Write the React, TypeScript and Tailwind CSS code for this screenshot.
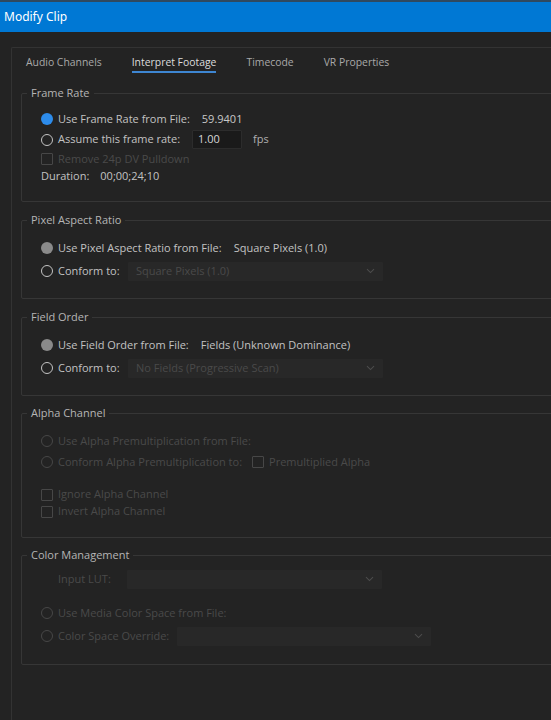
import React from "react";

type RadioState = "on" | "off" | "dimOn" | "dimOff";

function Radio({ state }: { state: RadioState }) {
  if (state === "on") {
    return <span className="w-[12px] h-[12px] shrink-0 rounded-full bg-[#2d8ceb]" />;
  }
  if (state === "dimOn") {
    return <span className="w-[12px] h-[12px] shrink-0 rounded-full bg-[#8a8a8a]" />;
  }
  if (state === "dimOff") {
    return (
      <span className="w-[12px] h-[12px] shrink-0 rounded-full border-[1.5px] border-[#474747]" />
    );
  }
  return (
    <span className="w-[12px] h-[12px] shrink-0 rounded-full border-[1.5px] border-[#c4c4c4]" />
  );
}

function Checkbox({ className }: { className?: string }) {
  return (
    <span
      className={`block w-[12px] h-[12px] shrink-0 rounded-[1px] border-[1.5px] border-[#474747] ${className ?? ""}`}
    />
  );
}

function Chevron() {
  return (
    <svg width="9" height="6" viewBox="0 0 9 6" className="shrink-0">
      <path d="M1 1.2 L4.5 4.6 L8 1.2" fill="none" stroke="#4c4c4c" strokeWidth="1.1" />
    </svg>
  );
}

function Dropdown({ width, text }: { width: string; text?: string }) {
  return (
    <div
      className={`${width} h-[19px] bg-[#282828] rounded-[1px] flex items-center justify-between pl-[8px] pr-[8px] text-[#4a4a4a]`}
    >
      <span>{text ?? ""}</span>
      <Chevron />
    </div>
  );
}

function Group({
  title,
  height,
  className,
  children,
}: {
  title: string;
  height: string;
  className?: string;
  children: React.ReactNode;
}) {
  return (
    <div
      className={`relative ${height} w-[580px] ml-[9px] border border-[#363636] rounded-[2px] pl-[19px] ${className ?? ""}`}
    >
      {/* legend sits on the top border */}
      <span className="absolute left-[5px] top-[-9px] px-[4px] bg-[#232323] text-[#b5b5b5] leading-[16px]">
        {title}
      </span>
      {children}
    </div>
  );
}

const tabs = ["Audio Channels", "Interpret Footage", "Timecode", "VR Properties"];

export default function App() {
  return (
    <div className="w-[551px] h-[720px] overflow-hidden bg-[#232323] font-['Open_Sans','Noto_Sans',sans-serif] text-[11px] text-[#c2c2c2]">
      <div className="h-[2px] bg-[#2f4960]" />
      <div className="h-[30px] bg-[#0078d4] flex items-center pl-[4px] text-[12px] text-white font-['Noto_Sans','Open_Sans',sans-serif]">
        Modify Clip
      </div>

      <div className="pl-[11px] pt-[15px]">
        <div className="w-[600px] h-[700px] border-l border-t border-[#333333] rounded-tl-[2px] pt-[6px]">
          {/* tabs */}
          <div className="flex pl-[14px] gap-[30px] text-[10.4px]">
            {tabs.map((t) => {
              const active = t === "Interpret Footage";
              return (
                <div key={t} className="flex flex-col">
                  <span
                    className={`leading-[16px] ${active ? "text-[#dcdcdc]" : "text-[#a9a9a9]"}`}
                  >
                    {t}
                  </span>
                  <span
                    className={`mt-[1px] h-[2px] ${active ? "bg-[#3e86d2]" : "bg-transparent"}`}
                  />
                </div>
              );
            })}
          </div>

          {/* Frame Rate */}
          <Group title="Frame Rate" height="h-[109px]" className="mt-[20px] pt-[15px]">
            <div className="h-[20px] flex items-center">
              <Radio state="on" />
              <span className="ml-[5px]">Use Frame Rate from File:</span>
              <span className="ml-[12px] text-[#c8c8c8]">59.9401</span>
            </div>
            <div className="h-[21px] flex items-center">
              <Radio state="off" />
              <span className="ml-[5px]">Assume this frame rate:</span>
              <div className="ml-[12px] w-[50px] h-[19px] bg-[#1a1a1a] border border-[#2c2c2c] rounded-[1px] flex items-center pl-[5px] text-[#d6d6d6]">
                1.00
              </div>
              <span className="ml-[11px] text-[#b0b0b0]">fps</span>
            </div>
            <div className="h-[18px] flex items-center">
              <Checkbox />
              <span className="ml-[5px] text-[#4a4a4a]">Remove 24p DV Pulldown</span>
            </div>
            <div className="h-[16px] flex items-center">
              <span>Duration:</span>
              <span className="ml-[11px]">00;00;24;10</span>
            </div>
          </Group>

          {/* Pixel Aspect Ratio */}
          <Group title="Pixel Aspect Ratio" height="h-[79px]" className="mt-[18px] pt-[17px]">
            <div className="h-[20px] flex items-center">
              <Radio state="dimOn" />
              <span className="ml-[5px]">Use Pixel Aspect Ratio from File:</span>
              <span className="ml-[12px]">Square Pixels (1.0)</span>
            </div>
            <div className="mt-[3px] h-[20px] flex items-center">
              <Radio state="off" />
              <span className="ml-[5px] w-[70px]">Conform to:</span>
              <Dropdown width="w-[255px]" text="Square Pixels (1.0)" />
            </div>
          </Group>

          {/* Field Order */}
          <Group title="Field Order" height="h-[79px]" className="mt-[18px] pt-[17px]">
            <div className="h-[20px] flex items-center">
              <Radio state="dimOn" />
              <span className="ml-[5px]">Use Field Order from File:</span>
              <span className="ml-[12px]">Fields (Unknown Dominance)</span>
            </div>
            <div className="mt-[3px] h-[20px] flex items-center">
              <Radio state="off" />
              <span className="ml-[5px] w-[70px]">Conform to:</span>
              <Dropdown width="w-[255px]" text="No Fields (Progressive Scan)" />
            </div>
          </Group>

          {/* Alpha Channel */}
          <Group
            title="Alpha Channel"
            height="h-[125px]"
            className="mt-[17px] pt-[17px] text-[#4a4a4a]"
          >
            <div className="h-[20px] flex items-center">
              <Radio state="dimOff" />
              <span className="ml-[5px]">Use Alpha Premultiplication from File:</span>
            </div>
            <div className="mt-[1px] h-[20px] flex items-center">
              <Radio state="dimOff" />
              <span className="ml-[5px]">Conform Alpha Premultiplication to:</span>
              <Checkbox className="ml-[10px]" />
              <span className="ml-[5px]">Premultiplied Alpha</span>
            </div>
            <div className="mt-[14px] h-[17px] flex items-center">
              <Checkbox />
              <span className="ml-[5px]">Ignore Alpha Channel</span>
            </div>
            <div className="h-[17px] flex items-center">
              <Checkbox />
              <span className="ml-[5px]">Invert Alpha Channel</span>
            </div>
          </Group>

          {/* Color Management */}
          <Group
            title="Color Management"
            height="h-[110px]"
            className="mt-[17px] pt-[13px] text-[#4a4a4a]"
          >
            <div className="h-[20px] flex items-center">
              <span className="ml-[17px] w-[69px]">Input LUT:</span>
              <Dropdown width="w-[255px]" />
            </div>
            <div className="mt-[14px] h-[20px] flex items-center">
              <Radio state="dimOff" />
              <span className="ml-[5px]">Use Media Color Space from File:</span>
            </div>
            <div className="mt-[3px] h-[20px] flex items-center">
              <Radio state="dimOff" />
              <span className="ml-[5px] w-[119px]">Color Space Override:</span>
              <Dropdown width="w-[254px]" />
            </div>
          </Group>
        </div>
      </div>
    </div>
  );
}
